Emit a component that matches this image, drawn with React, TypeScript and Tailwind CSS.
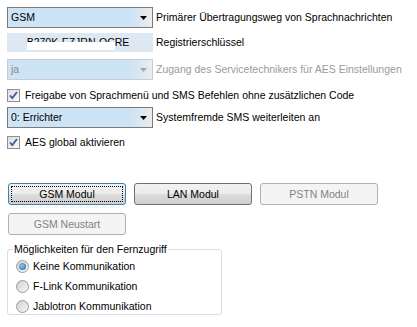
import type { ReactNode } from "react";

const font = "font-['Liberation_Sans',Arial,sans-serif]";

function Combo({ value, disabled = false }: { value: string; disabled?: boolean }) {
  return (
    <div
      className={`flex h-[21px] w-[146px] shrink-0 items-center border ${
        disabled ? "border-[#c9cdd1]" : "border-[#7a7a7a]"
      } bg-[#cde3f6]`}
    >
      <span className={`pl-[3px] ${disabled ? "text-[#8a8a8a]" : "text-black"}`}>{value}</span>
      <div className="ml-auto flex h-full w-[22px] items-center justify-center bg-gradient-to-r from-[#cde3f6] to-[#ececec]">
        <svg width="7" height="4" viewBox="0 0 7 4" className="ml-[4px]">
          <path d="M0 0h7L3.5 4z" fill={disabled ? "#a6a6a6" : "#000"} />
        </svg>
      </div>
    </div>
  );
}

function Check({ label }: { label: string }) {
  return (
    <div className="flex h-[13px] items-center gap-[5px]">
      <div className="flex h-[13px] w-[13px] items-center justify-center border border-[#8f8f8f] bg-gradient-to-br from-[#dcdcdc] to-[#fafafa]">
        <svg width="9" height="9" viewBox="0 0 9 9">
          <path d="M1 4.5l2.3 2.6L8 1" fill="none" stroke="#3d5899" strokeWidth="1.8" />
        </svg>
      </div>
      <span className="whitespace-nowrap">{label}</span>
    </div>
  );
}

function Btn({ children, focus = false, disabled = false }: { children: ReactNode; focus?: boolean; disabled?: boolean }) {
  if (disabled) {
    return (
      <div className="flex h-[22px] w-[118px] items-center justify-center rounded-[3px] border border-[#adb2b5] bg-[#f4f4f4] text-[#838383]">
        {children}
      </div>
    );
  }
  return (
    <div
      className={`relative flex h-[22px] w-[118px] items-center justify-center rounded-[3px] border ${
        focus ? "border-[#3c7fb1]" : "border-[#707070]"
      } bg-[linear-gradient(#f2f2f2_0%,#ebebeb_50%,#dddddd_50%,#cfcfcf_100%)]`}
    >
      {focus && <div className="absolute inset-[2px] border border-dotted border-black" />}
      <span className="relative">{children}</span>
    </div>
  );
}

function Radio({ label, checked = false }: { label: string; checked?: boolean }) {
  return (
    <div className="flex h-[13px] items-center gap-[4px]">
      <div className="flex h-[13px] w-[13px] items-center justify-center rounded-full border border-[#9a9a9a] bg-gradient-to-br from-[#d0d0d0] to-[#f8f8f8]">
        {checked && (
          <div className="h-[7px] w-[7px] rounded-full bg-[radial-gradient(circle_at_40%_40%,#8ecbf0,#1b5f9c)]" />
        )}
      </div>
      <span className="whitespace-nowrap">{label}</span>
    </div>
  );
}

export default function App() {
  return (
    <div className={`h-[327px] w-[417px] bg-white pl-[7px] pt-[7px] text-[10.5px] leading-none text-black ${font}`}>
      <div className="flex items-center gap-[3px] whitespace-nowrap">
        <Combo value="GSM" />
        <span>Primärer Übertragungsweg von Sprachnachrichten</span>
      </div>

      <div className="mt-[5px] flex items-center gap-[3px] whitespace-nowrap">
        <div className="relative flex h-[19px] w-[146px] shrink-0 items-center justify-center bg-[#dde8f3]">
          <span className="pr-[4px]">B270K-EZJRN-QCRE</span>
          <div className="absolute left-[20px] top-[9px] h-[8px] w-[88px] bg-white" />
        </div>
        <span>Registrierschlüssel</span>
      </div>

      <div className="mt-[7px] flex items-center gap-[3px] whitespace-nowrap">
        <Combo value="ja" disabled />
        <span className="text-[#9a9a9a]">Zugang des Servicetechnikers für AES Einstellungen</span>
      </div>

      <div className="mt-[9px]">
        <Check label="Freigabe von Sprachmenü und SMS Befehlen ohne zusätzlichen Code" />
      </div>

      <div className="mt-[5px] flex items-center gap-[3px] whitespace-nowrap">
        <Combo value="0: Errichter" />
        <span>Systemfremde SMS weiterleiten an</span>
      </div>

      <div className="mt-[8px]">
        <Check label="AES global aktivieren" />
      </div>

      <div className="mt-[34px] flex gap-[8px] pl-[1px]">
        <Btn focus>GSM Modul</Btn>
        <Btn>LAN Modul</Btn>
        <Btn disabled>PSTN Modul</Btn>
      </div>

      <div className="mt-[8px] pl-[1px]">
        <Btn disabled>GSM Neustart</Btn>
      </div>

      <fieldset className="mt-[9px] h-[71px] w-[215px] rounded-[3px] border border-[#d5dfe5] pl-[8px] pt-[2px]">
        <legend className="-ml-[3px] px-[1px]">Möglichkeiten für den Fernzugriff</legend>
        <div className="flex flex-col gap-[7px] pt-[3px]">
          <Radio label="Keine Kommunikation" checked />
          <Radio label="F-Link Kommunikation" />
          <Radio label="Jablotron Kommunikation" />
        </div>
      </fieldset>
    </div>
  );
}
